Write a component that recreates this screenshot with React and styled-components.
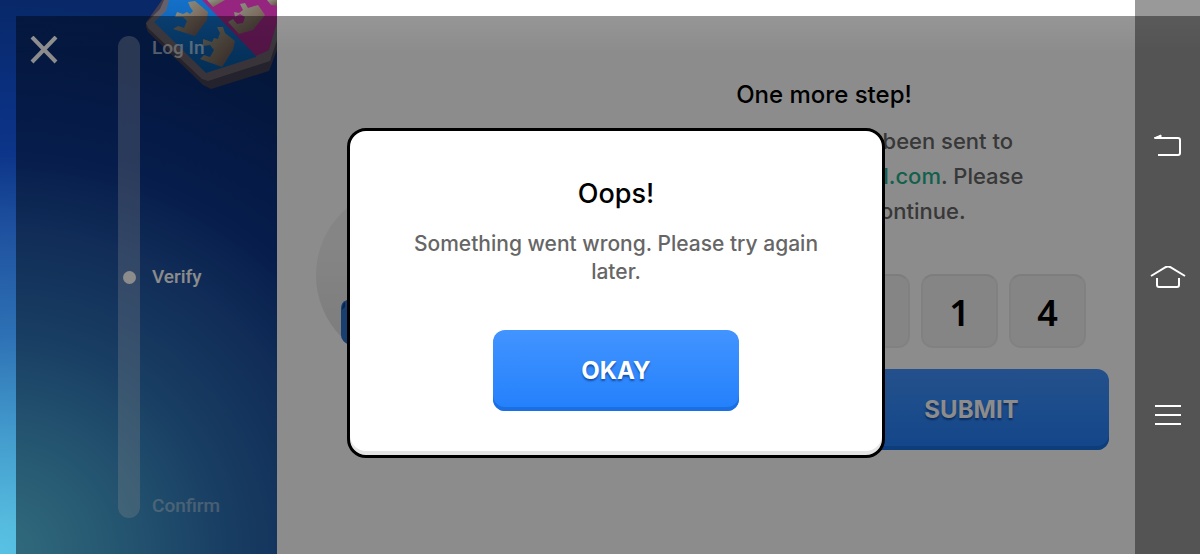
import React from 'react';
import styled, { createGlobalStyle } from 'styled-components';

const Global = createGlobalStyle`
  * { box-sizing: border-box; }
  body { margin: 0; background: #fff; font-family: Inter, "Liberation Sans", sans-serif; }
  button, input { font-family: inherit; }
`;

const Page = styled.div`
  display: grid;
  grid-template-columns: 277px minmax(0, 1fr) 65px;
  min-height: 100vh;
`;

const Sidebar = styled.aside`
  position: relative;
  display: flex;
  justify-content: space-between;
  padding: 36px 32px 36px 28px;
  background: radial-gradient(
    ellipse 570px 100% at 0% 100%,
    rgb(88, 194, 228),
    rgb(85, 186, 222) 6%,
    rgb(66, 154, 204) 22%,
    rgb(45, 112, 180) 40%,
    rgb(31, 82, 160) 58%,
    rgb(12, 52, 136) 73%,
    rgb(10, 48, 128) 82%,
    rgb(8, 40, 104) 100%
  );
`;

const Emblem = styled.svg`
  position: absolute;
  top: 0;
  right: 0;
`;

const CloseButton = styled.button`
  position: relative;
  align-self: flex-start;
  display: flex;
  padding: 0;
  border: 0;
  background: none;
`;

const Stepper = styled.div`
  position: relative;
  display: flex;
  gap: 12px;
  width: 127px;
`;

const Track = styled.div`
  display: flex;
  align-items: center;
  justify-content: center;
  width: 22px;
  border-radius: 11px;
  background: rgba(255, 255, 255, 0.28);
`;

const Dot = styled.span`
  width: 13px;
  height: 13px;
  border-radius: 50%;
  background: #fff;
`;

const Steps = styled.ol`
  display: flex;
  flex-direction: column;
  justify-content: space-between;
  margin: 0;
  padding: 0;
  list-style: none;
`;

const Step = styled.li`
  font: 500 19px/24px Roboto, "Liberation Sans", sans-serif;
  color: #fff;
  opacity: ${({ $opacity }) => $opacity};
`;

const Main = styled.main`
  display: flex;
  justify-content: space-between;
  padding: 80px 26px 100px 39px;
`;

const Avatar = styled.svg`
  margin-top: 107px;
`;

const Form = styled.form`
  display: flex;
  flex-direction: column;
  align-items: center;
  width: 570px;
`;

const Title = styled.h1`
  margin: 0;
  font-size: 24px;
  font-weight: 500;
  line-height: 30px;
  color: #000;
`;

const Message = styled.p`
  margin: 14px 0 45px;
  font-size: 22px;
  font-weight: 500;
  line-height: 35px;
  text-align: center;
  color: #666;
`;

const Line = styled.span`
  display: block;
`;

const Email = styled.span`
  color: #26b08a;
`;

const CodeRow = styled.div`
  display: flex;
  align-self: flex-end;
  gap: 11px;
  margin: 0 23px 21px 0;
`;

const Digit = styled.input`
  width: 77px;
  height: 74px;
  padding: 2px 0 0;
  border: 2px solid #ececec;
  border-top-color: #e4e4e4;
  border-radius: 12px;
  background: #f3f3f3;
  font: 600 36px "Noto Sans", sans-serif;
  text-align: center;
  color: #000;
`;

const Actions = styled.div`
  display: flex;
  gap: 20px;
  width: 100%;
`;

const Button = styled.button`
  flex: ${({ $fixed }) => ($fixed ? 'none' : '1')};
  width: ${({ $fixed }) => ($fixed ? '246px' : 'auto')};
  height: 81px;
  padding: 0;
  border: 0;
  border-radius: 12px;
  background: linear-gradient(#4294ff, #2380fb);
  box-shadow: inset 0 -4px 0 #1a70e2;
  font-size: 24px;
  font-weight: 700;
  line-height: 32px;
  color: #fff;
  text-shadow: 0 2px 2px rgba(0, 40, 110, 0.6);
`;

const NavBar = styled.nav`
  display: flex;
  flex-direction: column;
  align-items: center;
  justify-content: space-between;
  padding: 126px 0 118px;
  background: #999;
`;

const NavButton = styled.button`
  position: relative;
  z-index: 2;
  display: flex;
  padding: 0;
  border: 0;
  background: none;
`;

const Overlay = styled.div`
  position: fixed;
  top: 16px;
  left: 16px;
  z-index: 1;
  display: flex;
  align-items: center;
  justify-content: center;
  width: 100vw;
  height: 100vh;
  background: linear-gradient(rgba(0, 0, 0, 0.41), rgba(0, 0, 0, 0.45) 36px);
`;

const Dialog = styled.section`
  display: flex;
  flex-direction: column;
  align-items: center;
  width: 538px;
  padding: 46px 60px 44px;
  border: 3px solid #000;
  border-radius: 19px;
  background: #fff;
  box-shadow: inset 0 -4px 0 #e6e6e6;
`;

const DialogTitle = styled.h2`
  margin: 0 0 19px;
  font-size: 27px;
  font-weight: 500;
  line-height: 34px;
  color: #000;
`;

const DialogText = styled.p`
  margin: 0 0 44px;
  font-size: 21px;
  font-weight: 500;
  line-height: 28px;
  text-align: center;
  color: #666;
`;

const digits = ['5', '0', '2', '7', '1', '4'];

export default function App() {
  return (
    <>
      <Global />
      <Page>
        <Sidebar>
          <Emblem width="131" height="92" viewBox="146 0 131 92" aria-hidden="true">
            <defs>
              <linearGradient id="gold" x1="0" y1="0" x2="1" y2="1">
                <stop offset="0" stopColor="#8f9a8c" />
                <stop offset="0.6" stopColor="#7c6c5e" />
                <stop offset="1" stopColor="#594a55" />
              </linearGradient>
              <linearGradient id="blue" x1="0" y1="0" x2="0" y2="1">
                <stop offset="0" stopColor="#1470c8" />
                <stop offset="1" stopColor="#07569e" />
              </linearGradient>
            </defs>
            <path d="M162 0L145 24L148 32L203 85L211 89L269 71L277 50V0Z" fill="#433e50" />
            <path d="M164 0L160 9L146 23L148 28L202 79L208 81L270 61L277 40V0Z" fill="#66606b" />
            <path d="M169 0L166 11L154 22L206 73L256 57L277 0Z" fill="url(#blue)" />
            <path d="M202 0L256 56L269 50L277 22V0Z" fill="#96257f" />
            <g fill="url(#gold)">
              <path d="M188 2L195 1L208 12L207 20L195 36L173 29L178 26L184 28L187 21L183 17L175 17L177 12L183 14L187 12L190 14L193 11L190 7Z" />
              <path d="M217 27L223 27L225 33L235 41L233 50L222 67L200 59L204 55L210 57L214 50L210 45L203 46L203 39L212 42L214 38L218 39L220 33Z" />
              <path d="M240 4L245 3L248 8L258 5L265 15L253 30L239 34L228 22L233 19L237 24L243 23L245 17L240 14L235 17L234 12L239 13L243 10Z" />
              <path d="M207 0H225L213 7Z" />
              <path d="M267 0H277V6L271 5Z" />
            </g>
          </Emblem>
          <CloseButton aria-label="Close">
            <svg width="32" height="28" viewBox="0 0 32 28" fill="none" stroke="#fff" strokeWidth="4">
              <path d="M4 1L28 26M28 1L4 26" />
            </svg>
          </CloseButton>
          <Stepper>
            <Track><Dot /></Track>
            <Steps>
              <Step $opacity={0.6}>Log In</Step>
              <Step $opacity={1}>Verify</Step>
              <Step $opacity={0.4}>Confirm</Step>
            </Steps>
          </Stepper>
        </Sidebar>
        <Main>
          <Avatar width="176" height="176" viewBox="0 0 176 176" aria-hidden="true">
            <defs>
              <linearGradient id="disc" x1="0" y1="0" x2="0" y2="1">
                <stop offset="0.3" stopColor="#f3f3f3" />
                <stop offset="1" stopColor="#e0e0e0" />
              </linearGradient>
            </defs>
            <circle cx="88" cy="88" r="88" fill="url(#disc)" />
            <path d="M25 121Q25 115 31 113H145V158H33Q25 154 25 148Z" fill="#2f72cc" />
            <path d="M26 123Q26 117 29 115V120Z" fill="#0f4690" />
          </Avatar>
          <Form onSubmit={(e) => e.preventDefault()}>
            <Title>One more step!</Title>
            <Message>
              <Line>A verification code has been sent to</Line>
              <Line><Email>player.name012@hotmail.com</Email>. Please</Line>
              <Line>enter the code to continue.</Line>
            </Message>
            <CodeRow>
              {digits.map((d, i) => (
                <Digit key={i} defaultValue={d} maxLength={1} aria-label={`Digit ${i + 1}`} />
              ))}
            </CodeRow>
            <Actions>
              <Button type="button">RESEND</Button>
              <Button type="submit">SUBMIT</Button>
            </Actions>
          </Form>
        </Main>
        <NavBar>
          <NavButton aria-label="Back">
            <svg width="36" height="40" viewBox="0 0 36 40" fill="none" stroke="#fff" strokeWidth="2">
              <path d="M5 12H28Q30 12 30 14V27Q30 29 28 29H8" />
              <path d="M4 12L11 9V12Z" fill="#fff" strokeWidth="1" />
            </svg>
          </NavButton>
          <NavButton aria-label="Home">
            <svg width="36" height="30" viewBox="0 4 36 30" fill="none" stroke="#fff" strokeWidth="2">
              <path d="M1 14L16 5Q18 4 20 5L35 14" />
              <path d="M7 16V23Q7 25 9 25H27Q29 25 29 23V16" />
            </svg>
          </NavButton>
          <NavButton aria-label="Menu">
            <svg width="26" height="40" viewBox="0 0 26 40" fill="none" stroke="#fff" strokeWidth="2">
              <path d="M0 10H26M0 19H26M0 28H26" />
            </svg>
          </NavButton>
        </NavBar>
      </Page>
      <Overlay>
        <Dialog role="alertdialog" aria-labelledby="dialog-title">
          <DialogTitle id="dialog-title">Oops!</DialogTitle>
          <DialogText>Something went wrong. Please try again later.</DialogText>
          <Button type="button" $fixed>OKAY</Button>
        </Dialog>
      </Overlay>
    </>
  );
}
